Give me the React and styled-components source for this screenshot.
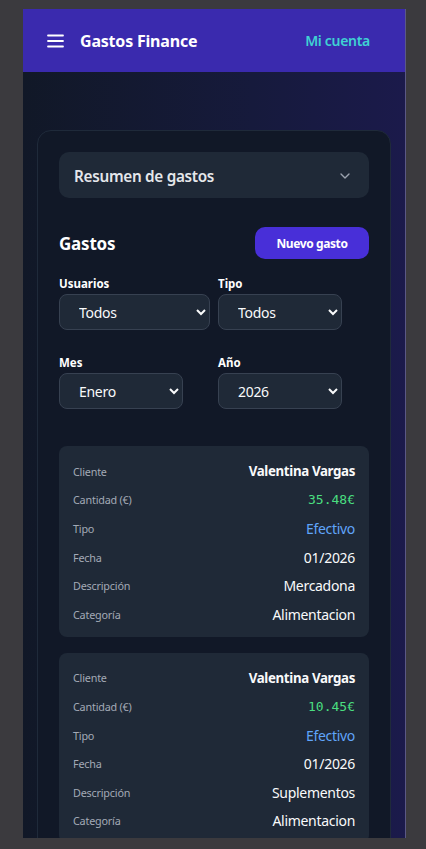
import React from "react";
import styled, { createGlobalStyle } from "styled-components";

const Global = createGlobalStyle`
  html, body { margin: 0; padding: 0; }
  body {
    background: #3b3a3e;
    font-family: "Noto Sans", "Open Sans", sans-serif;
    width: 426px;
    height: 849px;
    overflow: hidden;
  }
  * { box-sizing: border-box; }
`;

const Stage = styled.div`
  padding: 9px 0 0 23px;
`;

const Viewport = styled.div`
  width: 383px;
  height: 829px;
  overflow: hidden;
  border-right: 1px solid #5b5885;
  background: linear-gradient(90deg, #111827 0%, #161a3c 60%, #1b1a4b 100%);
  display: flex;
  flex-direction: column;
`;

const Header = styled.header`
  height: 63px;
  flex: none;
  background: #3a2aae;
  display: flex;
  align-items: center;
  padding: 0 35px 0 24px;
`;

const Brand = styled.div`
  display: flex;
  align-items: center;
  gap: 16px;
  flex: 1;
`;

const Title = styled.span`
  color: #ffffff;
  font-weight: 700;
  font-size: 16px;
  letter-spacing: -0.2px;
`;

const Account = styled.a`
  color: #3fd2d3;
  font-weight: 600;
  font-size: 14px;
  letter-spacing: -0.3px;
  text-decoration: none;
`;

const Main = styled.main`
  padding: 58px 14px 0 14px;
`;

const Panel = styled.section`
  background: #111827;
  border: 1px solid #1f2a3a;
  border-radius: 14px;
  padding: 21px 21px 40px;
`;

const Accordion = styled.button`
  width: 100%;
  height: 46px;
  background: #1f2937;
  border: none;
  border-radius: 10px;
  display: flex;
  align-items: center;
  justify-content: space-between;
  padding: 2px 16px 0 15px;
  color: #e5e7eb;
  font-family: inherit;
  font-weight: 600;
  font-size: 15.3px;
  letter-spacing: -0.3px;
`;

const TitleRow = styled.div`
  display: flex;
  align-items: center;
  justify-content: space-between;
  margin-top: 29px;
`;

const Heading = styled.h2`
  margin: 0;
  color: #ffffff;
  font-size: 17px;
  font-weight: 700;
  letter-spacing: -0.2px;
`;

const PrimaryButton = styled.button`
  width: 114px;
  height: 32px;
  border: none;
  border-radius: 10px;
  background: #482fd8;
  color: #ffffff;
  font-family: inherit;
  font-weight: 700;
  font-size: 12px;
  letter-spacing: -0.4px;
`;

const Filters = styled.div`
  display: grid;
  grid-template-columns: 151px 151px;
  column-gap: 8px;
  row-gap: 25px;
  margin-top: 17px;
`;

const Field = styled.label`
  display: flex;
  flex-direction: column;
  align-items: flex-start;
  gap: 2px;
`;

const FieldLabel = styled.span`
  color: #ffffff;
  font-size: 11.5px;
  font-weight: 700;
  line-height: 16px;
`;

const Select = styled.select`
  width: ${(p) => p.$w || "124px"};
  height: 36px;
  background: #1f2937;
  color: #f9fafb;
  border: 1px solid #374151;
  border-radius: 8px;
  padding: 1px 6px 0 15px;
  font-family: inherit;
  font-size: 14px;
  letter-spacing: -0.3px;
  color-scheme: dark;
  outline: none;
`;

const List = styled.div`
  display: flex;
  flex-direction: column;
  gap: 16px;
  margin-top: 37px;
`;

const ExpenseCard = styled.article`
  background: #1f2937;
  border-radius: 8px;
  padding: 11px 14px 8px 14px;
`;

const Row = styled.div`
  height: 28.6px;
  display: flex;
  align-items: center;
  justify-content: space-between;
`;

const RowLabel = styled.span`
  color: #a3aab6;
  font-size: 10.8px;
  font-weight: 400;
  letter-spacing: -0.2px;
`;

const RowValue = styled.span`
  color: ${(p) => p.$color || "#f9fafb"};
  font-size: ${(p) => (p.$mono ? "13px" : p.$bold ? "13.3px" : "14px")};
  letter-spacing: ${(p) => (p.$mono ? "0" : p.$bold ? "-0.35px" : "-0.3px")};
  font-weight: ${(p) => (p.$bold ? 700 : 400)};
  font-family: ${(p) => (p.$mono ? '"DejaVu Sans Mono", "Liberation Mono", monospace' : "inherit")};
`;

const MenuIcon = () => (
  <svg width="17" height="14" viewBox="0 0 17 14" fill="none">
    <g stroke="#ffffff" strokeWidth="1.8" strokeLinecap="round">
      <line x1="1" y1="1.5" x2="16" y2="1.5" />
      <line x1="1" y1="7" x2="16" y2="7" />
      <line x1="1" y1="12.5" x2="16" y2="12.5" />
    </g>
  </svg>
);

const Chevron = () => (
  <svg width="16" height="16" viewBox="0 0 24 24" fill="none" stroke="#9ca3af" strokeWidth="2" strokeLinecap="round" strokeLinejoin="round">
    <path d="m6 9 6 6 6-6" />
  </svg>
);

const expenses = [
  { cliente: "Valentina Vargas", cantidad: "35.48€", tipo: "Efectivo", fecha: "01/2026", desc: "Mercadona", cat: "Alimentacion" },
  { cliente: "Valentina Vargas", cantidad: "10.45€", tipo: "Efectivo", fecha: "01/2026", desc: "Suplementos", cat: "Alimentacion" },
];

export default function App() {
  return (
    <>
      <Global />
      <Stage>
        <Viewport>
          <Header>
            <Brand>
              <MenuIcon />
              <Title>Gastos Finance</Title>
            </Brand>
            <Account href="#">Mi cuenta</Account>
          </Header>
          <Main>
            <Panel>
              <Accordion>
                <span>Resumen de gastos</span>
                <Chevron />
              </Accordion>
              <TitleRow>
                <Heading>Gastos</Heading>
                <PrimaryButton>Nuevo gasto</PrimaryButton>
              </TitleRow>
              <Filters>
                <Field>
                  <FieldLabel>Usuarios</FieldLabel>
                  <Select $w="151px" defaultValue="todos">
                    <option value="todos">Todos</option>
                    <option value="vv">Valentina Vargas</option>
                  </Select>
                </Field>
                <Field>
                  <FieldLabel>Tipo</FieldLabel>
                  <Select defaultValue="todos">
                    <option value="todos">Todos</option>
                    <option value="ef">Efectivo</option>
                  </Select>
                </Field>
                <Field>
                  <FieldLabel>Mes</FieldLabel>
                  <Select defaultValue="1">
                    <option value="1">Enero</option>
                    <option value="2">Febrero</option>
                  </Select>
                </Field>
                <Field>
                  <FieldLabel>Año</FieldLabel>
                  <Select defaultValue="2026">
                    <option value="2026">2026</option>
                    <option value="2025">2025</option>
                  </Select>
                </Field>
              </Filters>
              <List>
                {expenses.map((e, i) => (
                  <ExpenseCard key={i}>
                    <Row><RowLabel>Cliente</RowLabel><RowValue $bold>{e.cliente}</RowValue></Row>
                    <Row><RowLabel>Cantidad (€)</RowLabel><RowValue $mono $color="#4ade80">{e.cantidad}</RowValue></Row>
                    <Row><RowLabel>Tipo</RowLabel><RowValue $color="#60a5fa">{e.tipo}</RowValue></Row>
                    <Row><RowLabel>Fecha</RowLabel><RowValue>{e.fecha}</RowValue></Row>
                    <Row><RowLabel>Descripción</RowLabel><RowValue>{e.desc}</RowValue></Row>
                    <Row><RowLabel>Categoría</RowLabel><RowValue>{e.cat}</RowValue></Row>
                  </ExpenseCard>
                ))}
              </List>
            </Panel>
          </Main>
        </Viewport>
      </Stage>
    </>
  );
}
